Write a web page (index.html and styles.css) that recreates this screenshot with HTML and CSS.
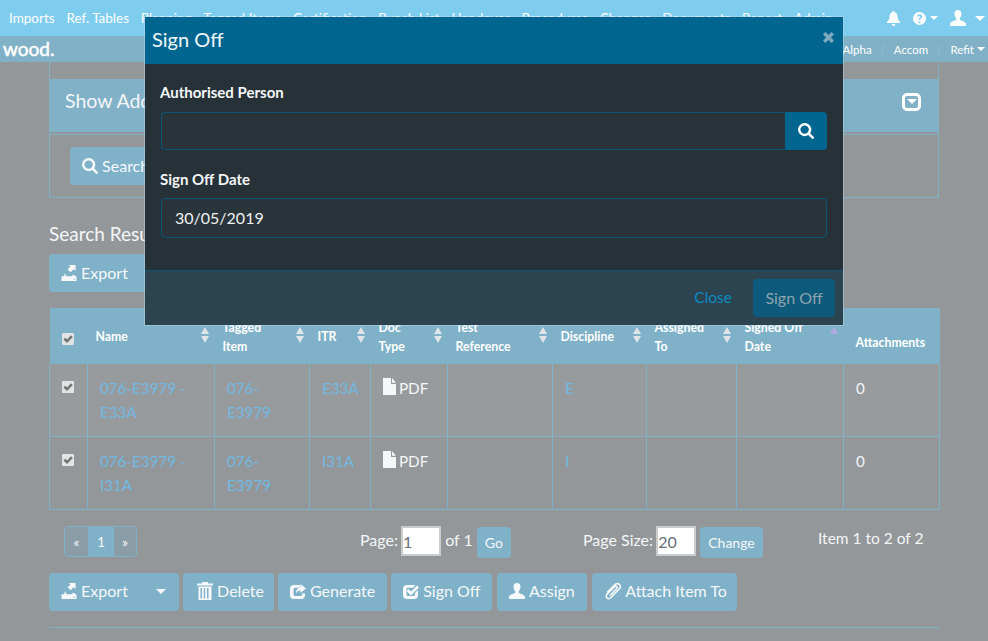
FILE: index.html
```html
<!DOCTYPE html>
<html lang="en">
<head>
  <meta charset="UTF-8">
  <title>Sign Off</title>
  <link rel="stylesheet" href="styles.css">
</head>
<body>
  <svg class="sprite" width="0" height="0">
    <symbol id="i-search" viewBox="0 0 16 16"><path d="M6.600 0a6.600 6.600 0 1 0 3.700 12.100l3.500 3.500a1.200 1.200 0 0 0 1.800-1.800l-3.500-3.500A6.600 6.600 0 0 0 6.600 0zm0 2.400a4.200 4.200 0 1 1 0 8.400 4.200 4.200 0 0 1 0-8.400z"/></symbol>
    <symbol id="i-bell" viewBox="0 0 14 16"><path d="M7 0c.7 0 1.100.5 1.100 1.200 2.200.5 3.100 2.300 3.200 4.500.1 2.700.7 4.400 2.700 6v1.100H0v-1.100c2-1.600 2.600-3.300 2.700-6 .1-2.200 1-4 3.200-4.500C5.900.5 6.300 0 7 0zM5 14h4a2 2 0 0 1-4 0z"/></symbol>
    <symbol id="i-help" viewBox="0 0 14 14"><path fill-rule="evenodd" d="M7 0a7 7 0 1 0 0 14A7 7 0 0 0 7 0zm-.9 10.200h1.900V12H6.100zM4.300 4.600C4.500 3.100 5.600 2.300 7.200 2.300c1.700 0 2.800 1 2.800 2.400 0 1.100-.6 1.700-1.300 2.200-.6.400-.8.700-.8 1.400H6.100c0-1.200.3-1.800 1.100-2.400.5-.4.800-.7.800-1.100s-.3-.8-.9-.8-.9.400-1 1z"/></symbol>
    <symbol id="i-user" viewBox="0 0 16 16"><path d="M8 0c2.300 0 3.500 1.600 3.500 3.800 0 1.800-.7 3.500-1.700 4.400v1.500c.5.700 5.200 1.600 6.200 3.800V16H0v-2.500c1-2.200 5.700-3.100 6.200-3.800V8.200C5.200 7.300 4.500 5.600 4.500 3.800 4.500 1.600 5.700 0 8 0z"/></symbol>
    <symbol id="i-export" viewBox="0 0 16 17"><path d="M7.500 0H15v6.500l-2.200-2-3 3.200-3.300-3.300 3-2.800zM3.500 8.500l2 3.500h5l2-1.500V10L16 12.500V17H0v-5h3zM12.500 14.500V15.500h2v-1z" fill-rule="evenodd"/></symbol>
    <symbol id="i-trash" viewBox="0 0 16 18"><path fill-rule="evenodd" d="M5.500 0h5l.8 1.600H16v1.800H0V1.600h4.700zM1.500 4.500h13V18h-13zm2 1.500V16.500h1.500V6zm3.300 0V16.500h1.400V6zm3.200 0V16.500h1.500V6z"/></symbol>
    <symbol id="i-share" viewBox="0 0 16 16"><path d="M4 2h6v2.800H5A1.500 1.500 0 0 0 3.500 6.300v5.200A1.500 1.500 0 0 0 5 13h5.500a1.500 1.500 0 0 0 1.500-1.500V10.500h3V12a4 4 0 0 1-4 4H4a4 4 0 0 1-4-4V6a4 4 0 0 1 4-4z"/><path d="M10.500 1L16 5.500 10.500 10V7.500C8.500 7.500 7 8.500 6 10.500c0-3.500 1.500-5.800 4.500-6.200z"/></symbol>
    <symbol id="i-check" viewBox="0 0 16 16"><path d="M4 2h8.500l-2.500 2.800H5A1.500 1.500 0 0 0 3.500 6.300v5.200A1.500 1.500 0 0 0 5 13h5.500a1.500 1.500 0 0 0 1.500-1.500V10l3-3v5a4 4 0 0 1-4 4H4a4 4 0 0 1-4-4V6a4 4 0 0 1 4-4z"/><path d="M5.500 6L8 8.500 14 2.500 16 4.500 8 12.500 3.500 8z"/></symbol>
    <symbol id="i-clip" viewBox="0 0 18 18"><path fill="none" stroke="currentColor" stroke-width="1.600" d="M3 10.500L10.500 3c1.800-1.800 4-1.600 5-.5s1.200 3-.5 4.800L7 15.500c-1.300 1.300-3 1.400-4 .5s-1-2.800.3-4.100l7-7c.8-.8 1.800-.9 2.400-.3s.5 1.600-.3 2.400L6 13.500"/></symbol>
    <symbol id="i-file" viewBox="0 0 13 17"><path d="M0 0h8v6h5v11H0zM9 0l4 4.800H9z"/></symbol>
    <symbol id="i-tick" viewBox="0 0 12 12"><path d="M1.500 6.500L3.200 4.800 5 6.500 9 2.200 10.800 4 5 10z"/></symbol>
  </svg>

  <header class="topnav">
    <nav class="menu">
      <a>Imports</a><a>Ref. Tables</a><a>Planning</a><a>Tagged Items</a><a>Certification</a><a>Punch List</a><a>Handover</a><a>Procedures</a><a>Changes</a><a>Documents</a><a>Report</a><a>Admin</a>
    </nav>
    <div class="tools">
      <svg class="ic bell"><use href="#i-bell"/></svg>
      <svg class="ic help"><use href="#i-help"/></svg><span class="caret"></span>
      <svg class="ic who"><use href="#i-user"/></svg><span class="caret far"></span>
    </div>
  </header>
  <div class="subbar">
    <span class="logo">wood.</span>
    <div class="crumbs">
      <a>Alpha</a><span class="sep">/</span><a>Accom</a><span class="sep">/</span><a>Refit</a><span class="caret small"></span>
    </div>
  </div>

  <main class="page">
    <section class="panel">
      <div class="panel-head">
        <span>Show Additional Filters</span>
        <span class="toggle"><span class="caret"></span></span>
      </div>
      <div class="panel-body">
        <button class="btn"><svg class="ic"><use href="#i-search"/></svg> Search</button>
      </div>
    </section>

    <h2>Search Results</h2>
    <div class="actions">
      <button class="btn split"><svg class="ic"><use href="#i-export"/></svg> Export</button>
    </div>

    <table class="results">
      <colgroup>
        <col class="c1"><col class="c2"><col class="c3"><col class="c4"><col class="c5"><col class="c6"><col class="c7"><col class="c8"><col class="c9"><col class="c10">
      </colgroup>
      <thead>
        <tr>
          <th class="tick-head"><span class="chk"><svg><use href="#i-tick"/></svg></span></th>
          <th><div class="th-in"><span>Name</span><i class="sort"></i></div></th>
          <th><div class="th-in"><span>Tagged<br>Item</span><i class="sort"></i></div></th>
          <th><div class="th-in"><span>ITR</span><i class="sort"></i></div></th>
          <th><div class="th-in"><span>Doc<br>Type</span><i class="sort"></i></div></th>
          <th><div class="th-in"><span>Test<br>Reference</span><i class="sort"></i></div></th>
          <th><div class="th-in"><span>Discipline</span><i class="sort"></i></div></th>
          <th><div class="th-in"><span>Assigned<br>To</span><i class="sort"></i></div></th>
          <th><div class="th-in"><span>Signed Off<br>Date</span><i class="sort asc"></i></div></th>
          <th class="plain">Attachments</th>
        </tr>
      </thead>
      <tbody>
        <tr class="odd">
          <td class="tick"><span class="chk"><svg><use href="#i-tick"/></svg></span></td>
          <td><a>076-E3979 - E33A</a></td>
          <td><a>076-E3979</a></td>
          <td><a>E33A</a></td>
          <td class="doc"><svg class="ic"><use href="#i-file"/></svg>PDF</td>
          <td></td>
          <td><a>E</a></td>
          <td></td>
          <td></td>
          <td>0</td>
        </tr>
        <tr>
          <td class="tick"><span class="chk"><svg><use href="#i-tick"/></svg></span></td>
          <td><a>076-E3979 - I31A</a></td>
          <td><a>076-E3979</a></td>
          <td><a>I31A</a></td>
          <td class="doc"><svg class="ic"><use href="#i-file"/></svg>PDF</td>
          <td></td>
          <td><a>I</a></td>
          <td></td>
          <td></td>
          <td>0</td>
        </tr>
      </tbody>
    </table>

    <div class="pagerow">
      <div class="pager"><a class="off">«</a><a class="on">1</a><a class="off">»</a></div>
      <div class="pg-go">Page: <input class="num" value="1"> of 1 <button class="btn mini">Go</button></div>
      <div class="pg-size">Page Size: <input class="num" value="20"> <button class="btn mini">Change</button></div>
      <div class="pg-count">Item 1 to 2 of 2</div>
    </div>

    <div class="actions bottom">
      <button class="btn split"><svg class="ic"><use href="#i-export"/></svg> Export<span class="caret"></span></button>
      <button class="btn del"><svg class="ic tall"><use href="#i-trash"/></svg> Delete</button>
      <button class="btn"><svg class="ic"><use href="#i-share"/></svg> Generate</button>
      <button class="btn"><svg class="ic"><use href="#i-check"/></svg> Sign Off</button>
      <button class="btn nudge"><svg class="ic"><use href="#i-user"/></svg> Assign</button>
      <button class="btn nudge attach"><svg class="ic clip"><use href="#i-clip"/></svg> Attach Item To</button>
    </div>
    <hr>
  </main>

  <div class="modal">
    <div class="modal-head">
      <span>Sign Off</span>
      <svg class="shut" viewBox="0 0 12 12"><path d="M2.600 0L6 3.400 9.400 0 12 2.600 8.600 6 12 9.400 9.400 12 6 8.600 2.600 12 0 9.400 3.400 6 0 2.600z"/></svg>
    </div>
    <div class="modal-body">
      <label>Authorised Person</label>
      <div class="lookup">
        <input type="text">
        <button><svg class="ic"><use href="#i-search"/></svg></button>
      </div>
      <label class="second">Sign Off Date</label>
      <input class="date" type="text" value="30/05/2019">
    </div>
    <div class="modal-foot">
      <a class="close">Close</a>
      <button class="go">Sign Off</button>
    </div>
  </div>
</body>
</html>
```

FILE: styles.css
```css
* { box-sizing: border-box; }
html, body { height: 100%; }
body { margin: 0; background: #93979a; color: #f4f6f7; font-family: Lato, "Noto Sans", sans-serif; font-size: 15px; overflow: hidden; position: relative; }
.sprite { position: absolute; }
.ic { width: 16px; height: 16px; fill: currentColor; vertical-align: -2px; }
.ic.tall { height: 18px; vertical-align: -3px; }

.topnav { height: 36px; background: #7fcdee; display: flex; justify-content: space-between; color: #fff; }
.menu { display: flex; padding: 10px 0 0 9px; font-size: 13.5px; gap: 11.8px; }
.tools { display: flex; align-items: center; padding: 0 3px 0 0; }
.tools .bell { width: 13px; height: 15px; margin-right: 13px; }
.tools .help { width: 13px; height: 13px; margin-right: 4px; }
.tools .who { width: 16px; height: 16px; margin: 0 9px 0 12px; }
.caret { display: inline-block; width: 0; height: 0; border: 4px solid transparent; border-top-color: currentColor; border-bottom: 0; vertical-align: middle; }
.caret.far { border-width: 5px; border-bottom: 0; }
.caret.small { margin-left: 3px; vertical-align: 3px; }

.subbar { height: 26px; background: #80b1c7; display: flex; justify-content: space-between; align-items: center; padding: 0 3px; }
.logo { font-size: 19px; font-weight: 400; color: #fff; -webkit-text-stroke: .5px #fff; line-height: 24px; margin-bottom: 1px; }
.crumbs { font-size: 11.5px; color: #fff; }
.sep { color: #9bbccc; margin: 0 8.5px; }

.page { width: 890px; margin-left: 49px; }
.panel { border-left: 1px solid #80b1c7; border-right: 1px solid #80b1c7; padding-top: 17px; }
.panel-head { margin: 0 -1px; height: 53px; background: #80b1c7; display: flex; justify-content: space-between; align-items: center; padding: 0 18px 10px 16px; font-size: 19.5px; }
.toggle { width: 19px; height: 18px; border: 3px solid #fff; border-radius: 5px; display: flex; align-items: center; justify-content: center; color: #fff; margin-top: 2px; }
.toggle .caret { border-width: 5px; border-bottom: 0; }
.panel-body { margin: 2px -1px 0; height: 64px; border: 1px solid #80b1c7; border-radius: 0 0 4px 4px; padding: 12px 20px; }

.btn { background: #7fb1c8; color: #f6f8f9; border: 0; border-radius: 4px; height: 38px; padding: 0 12px 2px; font: inherit; font-size: 16px; white-space: nowrap; }
.btn.mini { height: 31px; font-size: 14px; padding: 0 8px; vertical-align: middle; position: relative; top: 1px; }
.btn.del { padding: 0 10px 2px 14px; }
.btn.nudge { margin-left: 1px; }
.btn.attach { padding-right: 10px; }
h2 { margin: 23px 0 0; height: 33px; font-size: 19px; font-weight: 400; line-height: 25px; }
.actions { display: flex; gap: 4px; }
.split { width: 130px; text-align: left; position: relative; }
.split .caret { position: absolute; right: 13px; top: 16px; border-width: 5px; border-bottom: 0; }

.results { width: 890px; margin-top: 16px; border-collapse: collapse; table-layout: fixed; font-size: 15.2px; }
.c1 { width: 38px; } .c2 { width: 127px; } .c3 { width: 95px; } .c4 { width: 61px; } .c5 { width: 77px; }
.c6 { width: 105px; } .c7 { width: 94px; } .c8 { width: 90px; } .c9 { width: 107px; } .c10 { width: 96px; }
.results th { background: #7fb1c8; height: 55px; padding: 3px 5px 0 8px; font-size: 12.3px; font-weight: 700; text-align: left; line-height: 19px; color: #fff; }
.th-in { display: flex; justify-content: space-between; align-items: center; }
.sort { width: 9px; height: 16px; flex: none; position: relative; margin-top: -3px; }
.sort::before, .sort::after { content: ""; position: absolute; left: 0; border: 4.5px solid transparent; }
.sort::before { top: 0; border-top: 0; border-bottom: 7px solid #dfe5e8; }
.sort::after { bottom: 0; border-bottom: 0; border-top: 7px solid #dfe5e8; }
.sort.asc::before { border-bottom-color: #b4a9e2; }
.sort.asc::after { display: none; }
.results th.plain { vertical-align: bottom; padding: 0 12px 11px; }
.results th.tick-head { padding: 8px 0 0 12px; }
.results td { height: 73px; padding: 12px; border: 1px solid #7fb1c8; vertical-align: top; line-height: 24px; }
.results td a { color: #72b9e2; }
.results tr.odd td { background: #979b9e; }
.results td.tick { padding: 17px 0 0 12px; line-height: 12px; }
.chk { display: block; width: 12px; height: 12px; background: #e2e3e3; border-radius: 1px; color: #727578; }
.chk svg { display: block; width: 12px; height: 12px; fill: currentColor; }
.doc .ic { width: 13px; height: 17px; vertical-align: -1px; margin-right: 3px; }

.pagerow { display: flex; margin-top: 16px; height: 47px; font-size: 16px; }
.pager { margin-left: 15px; display: flex; height: 31px; border: 1px solid #7fb1c8; border-radius: 4px; overflow: hidden; font-size: 14px; line-height: 29px; text-align: center; }
.pager .off { background: #8a9ca6; width: 22px; }
.pager .on { background: #7fb1c8; width: 26px; }
.pager a:first-child { width: 23px; }
.pg-go { margin-left: 223px; width: 223px; white-space: nowrap; }
.pg-size { width: 235px; white-space: nowrap; }
.pg-count { padding-top: 3px; white-space: nowrap; font-size: 15.5px; }
.num { width: 40px; height: 30px; border: 2px solid #ccc; background: #fff; color: #667078; font: inherit; padding: 0; margin-left: -1px; vertical-align: middle; }

hr { margin: 16px 0 0; border: 0; border-top: 1px solid #7fb1c8; }
.bottom .ic.clip { width: 18px; height: 18px; vertical-align: -3px; }

.modal { position: absolute; left: 145px; top: 17px; width: 698px; height: 308px; display: flex; flex-direction: column; background: #263238; box-shadow: 0 0 0 1px rgba(190,215,230,.45); }
.modal-head { height: 47px; background: #00658f; display: flex; justify-content: space-between; align-items: center; padding: 0 9px 3px 7px; font-size: 20px; color: #f0f6f9; }
.shut { width: 11px; height: 11px; fill: #7fa9bf; margin-bottom: 3px; }
.modal-body { flex: 1; padding: 19px 16px 0 15px; }
.modal-body label { display: block; font-size: 15px; font-weight: 700; line-height: 18px; margin-bottom: 11px; color: #f4f6f7; }
.modal-body label.second { margin-bottom: 10px; }
.lookup { display: flex; height: 38px; margin: 0 0 20px 1px; }
.lookup input { flex: 1; background: #2a353b; border: 1px solid #0a5578; border-right: 0; border-radius: 4px 0 0 4px; }
.lookup button { width: 42px; border: 0; background: #00658f; color: #fff; border-radius: 0 4px 4px 0; padding: 0; }
.date { display: block; width: calc(100% - 1px); margin-left: 1px; height: 40px; background: #2a353b; border: 1px solid #0a5578; border-radius: 4px; color: #eef1f2; font: inherit; font-size: 16px; padding: 0 13px 2px; }
.modal-foot { height: 55px; background: #2c4350; border-top: 1px solid #0a5578; display: flex; justify-content: flex-end; align-items: center; padding: 0 8px 0 0; gap: 21px; font-size: 16px; }
.close { color: #0b8bc4; font-size: 15.5px; margin-bottom: 2px; }
.go { width: 82px; height: 38px; border: 0; border-radius: 4px; background: #0d5a7c; color: #8ea3ad; font: inherit; padding-bottom: 2px; }
```
